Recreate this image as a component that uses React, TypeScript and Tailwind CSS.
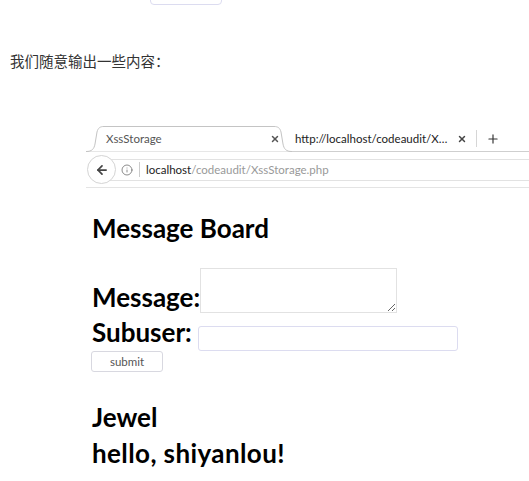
import { ArrowLeft, Info, Plus, X } from "lucide-react"

const sans = { fontFamily: "Lato, 'Open Sans', sans-serif" }

export default function App() {
  return (
    <div className="relative w-[529px] h-[481px] bg-white overflow-hidden">
      {/* leftover button from above */}
      <div className="absolute left-[150px] -top-[10px] w-[72px] h-[15px] rounded-[4px] border border-[#dcdcf0] bg-white" />

      <p
        className="pt-[52px] pl-[10px] text-[14.5px] leading-[18px] text-[#333]"
        style={{ fontFamily: "'Noto Sans CJK SC', sans-serif" }}
      >
        我们随意输出一些内容：
      </p>

      {/* browser chrome */}
      <div className="ml-[86px] mt-[56px]" style={sans}>
        <div className="relative flex items-end h-[26px] border-b border-[#cfcfcf]">
          <div className="relative w-[206px] h-[25px] flex items-center pl-[20px] pr-[12px]">
            <svg className="absolute inset-0" width="206" height="26" viewBox="0 0 206 26">
              <path
                d="M0 25.5 C6 25.5 8 23 9 18 L11 6 C12 2 14 0.5 18 0.5 L188 0.5 C192 0.5 194 2 195 6 L197 18 C198 23 200 25.5 206 25.5"
                fill="white"
                stroke="#c4c4c4"
              />
            </svg>
            <span className="relative text-[11.5px] text-[#555] flex-1">XssStorage</span>
            <X className="relative w-[10px] h-[10px] text-[#555]" strokeWidth={3.5} />
          </div>
          <div className="flex items-center h-[25px] pl-[3px]">
            <span className="text-[11.5px] text-[#222] w-[155px] whitespace-nowrap">http://localhost/codeaudit/X…</span>
            <X className="ml-[7px] w-[10px] h-[10px] text-[#444]" strokeWidth={3.5} />
            <div className="ml-[9px] w-px h-[17px] bg-[#d6d6d6]" />
            <Plus className="ml-[9px] w-[14px] h-[14px] text-[#333]" strokeWidth={2} />
          </div>
        </div>
        <div className="flex items-center h-[36px] border-b border-[#e4e4e4]">
          <div className="relative z-10 ml-[1px] w-[29px] h-[29px] rounded-full border border-[#d4d4d4] bg-white flex items-center justify-center">
            <ArrowLeft className="w-[14px] h-[14px] text-[#444]" strokeWidth={3} />
          </div>
          <div className="-ml-[15px] flex-1 h-[22px] border-y border-[#e2e2e2] flex items-center pl-[20px]">
            <Info className="w-[12px] h-[12px] text-[#666]" strokeWidth={1.5} />
            <div className="ml-[6px] w-px h-[15px] bg-[#ccc]" />
            <span className="ml-[6px] text-[11.5px]">
              <span className="text-[#222]">localhost</span>
              <span className="text-[#999]">/codeaudit/XssStorage.php</span>
            </span>
          </div>
        </div>
      </div>

      {/* page content */}
      <div className="pl-[92px] text-black" style={sans}>
        <h1 className="mt-[27px] text-[26px] leading-[26px] font-bold">Message Board</h1>
        <div className="mt-[27px] flex items-end">
          <span className="mb-[3px] text-[26px] leading-[26px] font-bold">Message:</span>
          <textarea className="w-[197px] h-[45px] border border-[#e2e2e2] resize" />
        </div>
        <div className="mt-[6px] flex items-end">
          <span className="mb-[6px] text-[26px] leading-[26px] font-bold">Subuser:</span>
          <input className="ml-[6px] w-[260px] h-[25px] rounded-[3px] border border-[#dcdcf0]" />
        </div>
        <button className="-ml-[1px] block w-[72px] h-[21px] rounded-[3px] border border-[#d8d8e0] bg-white text-[11.5px] text-[#555]">
          submit
        </button>
        <p className="mt-[32px] text-[26px] leading-[26px] font-bold">Jewel</p>
        <p className="mt-[10px] text-[26px] leading-[26px] font-bold tracking-[0.4px]">hello, shiyanlou!</p>
      </div>
    </div>
  )
}
